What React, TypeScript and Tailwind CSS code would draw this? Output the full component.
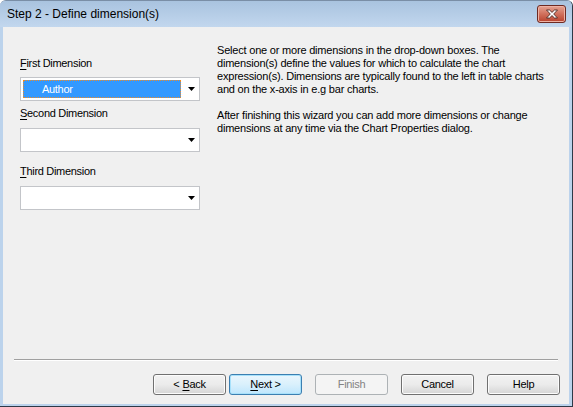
import React from "react";

function Arrow() {
  return (
    <svg width="7" height="4" viewBox="0 0 7 4" className="shrink-0">
      <path d="M0 0h7L3.5 4z" fill="#000" />
    </svg>
  );
}

function Combo({ value }: { value?: string }) {
  return (
    <div className="flex h-[24px] w-[180px] items-center border border-[#c3c5c9] bg-white pl-[2px] pr-[4px]">
      <div className="flex h-[18px] flex-1 items-center">
        {value && (
          <div className="flex h-[18px] w-[158px] items-center border border-dotted border-[#f08a24] bg-[#3399ff] pl-[18px] text-white">
            {value}
          </div>
        )}
      </div>
      <Arrow />
    </div>
  );
}

function Button({
  children,
  primary,
  disabled,
}: {
  children: React.ReactNode;
  primary?: boolean;
  disabled?: boolean;
}) {
  const base = "flex h-[21px] w-[73px] items-center justify-center rounded-[3px] border";
  if (disabled)
    return (
      <div className={`${base} border-[#adb2b5] bg-[#f4f4f4] text-[#838383]`}>{children}</div>
    );
  if (primary)
    return (
      <div
        className={`${base} border-[#3c7fb1] bg-gradient-to-b from-[#eaf6fd] via-[#d9f0fc] to-[#bee6fd] text-black shadow-[inset_0_0_0_1px_#a7e1fb]`}
      >
        {children}
      </div>
    );
  return (
    <div
      className={`${base} border-[#707070] bg-gradient-to-b from-[#f2f2f2] via-[#ebebeb] to-[#d5d5d5] text-black shadow-[inset_0_0_0_1px_#fcfcfc]`}
    >
      {children}
    </div>
  );
}

export default function App() {
  return (
    <div
      className="flex h-[407px] w-[573px] flex-col overflow-hidden rounded-t-[6px] border-t border-r border-b border-t-[#7a8ea6] border-r-[#2e3a48] border-b-[#2e3a48] bg-[#bcd3ec] text-[11px] leading-[13px] tracking-[-0.3px] text-black"
      style={{ fontFamily: '"Liberation Sans", Arial, sans-serif' }}
    >
      {/* title bar */}
      <div className="flex h-[26px] shrink-0 items-center bg-gradient-to-b from-[#a9c3df] to-[#c2d7ee] pl-[7px] pr-[6px]">
        <span className="text-[12px] leading-none tracking-normal text-black">Step 2 - Define dimension(s)</span>
        <div className="ml-auto flex h-[18px] w-[29px] items-center justify-center rounded-[3px] border border-[#6e2a22] bg-gradient-to-b from-[#e5a393] via-[#d0705c] to-[#b8402c] shadow-[inset_0_0_0_1px_#eeb2a4]">
          <svg width="14" height="10" viewBox="0 0 14 10">
            <path
              d="M1.5 1h3l2.5 2.4L9.5 1h3L8.7 5l3.8 4h-3L7 6.6 4.5 9h-3l3.8-4z"
              fill="#fff"
              stroke="#4a2a26"
              strokeWidth="0.9"
              strokeLinejoin="round"
            />
          </svg>
        </div>
      </div>

      {/* client */}
      <div className="mb-[2px] ml-[3px] mr-[3px] flex flex-1 flex-col bg-[#f0f0f0]">
        <div className="flex pt-[17px]">
          <div className="ml-[17px] flex w-[180px] flex-col">
            <div className="mt-[13px] h-[13px]">
              <span className="underline underline-offset-[2px]">F</span>irst Dimension
            </div>
            <div className="mt-[7px]">
              <Combo value="Author" />
            </div>
            <div className="mt-[6px] h-[13px]">
              <span className="underline underline-offset-[2px]">S</span>econd Dimension
            </div>
            <div className="mt-[8px]">
              <Combo />
            </div>
            <div className="mt-[13px] h-[13px]">
              <span className="underline underline-offset-[2px]">T</span>hird Dimension
            </div>
            <div className="mt-[8px]">
              <Combo />
            </div>
          </div>
          <div className="ml-[17px] whitespace-nowrap tracking-[-0.2px]">
            <p>
              Select one or more dimensions in the drop-down boxes. The
              <br />
              dimension(s) define the values for which to calculate the chart
              <br />
              expression(s). Dimensions are typically found to the left in table charts
              <br />
              and on the x-axis in e.g bar charts.
            </p>
            <p className="mt-[13px]">
              After finishing this wizard you can add more dimensions or change
              <br />
              dimensions at any time via the Chart Properties dialog.
            </p>
          </div>
        </div>

        <div className="mx-[11px] mt-auto h-[2px] border-t border-b border-t-[#a0a0a0] border-b-white" />

        <div className="mb-[9px] mt-[13px] flex pr-[9px]">
          <div className="ml-auto flex gap-[3px]">
            <Button>
              &lt; <span className="ml-[3px] underline underline-offset-[2px]">B</span>ack
            </Button>
            <Button primary>
              <span className="underline underline-offset-[2px]">N</span>ext &gt;
            </Button>
          </div>
          <div className="ml-[13px]">
            <Button disabled>Finish</Button>
          </div>
          <div className="ml-[13px]">
            <Button>Cancel</Button>
          </div>
          <div className="ml-[13px]">
            <Button>Help</Button>
          </div>
        </div>
      </div>
    </div>
  );
}
